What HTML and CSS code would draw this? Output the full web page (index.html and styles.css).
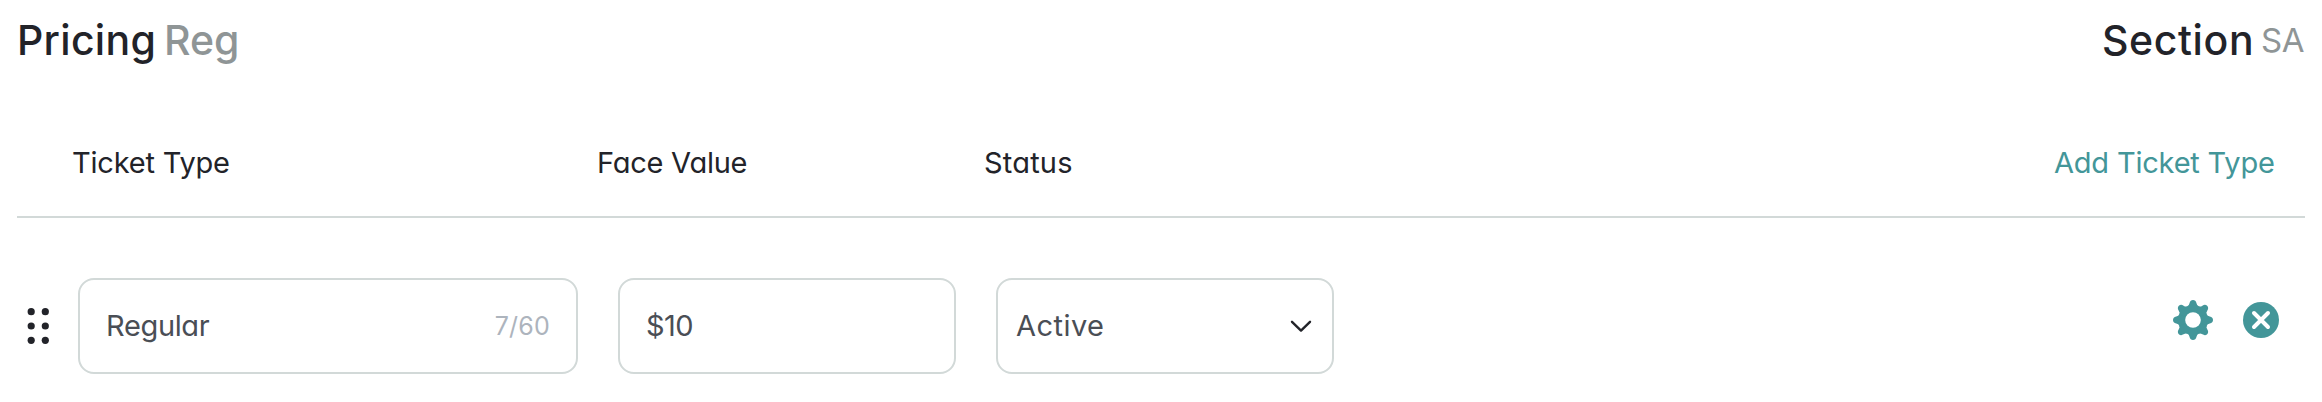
FILE: index.html
```html
<!DOCTYPE html>
<html lang="en">
<head>
<meta charset="utf-8">
<title>Pricing</title>
<link rel="stylesheet" href="styles.css">
</head>
<body>
<main class="pricing">
  <header class="title-bar">
    <h1 class="title"><span class="t-pricing">Pricing</span><span class="muted t-reg">Reg</span></h1>
    <h1 class="title title-right"><span class="t-section">Section</span><span class="muted t-sa">SA</span></h1>
  </header>
  <div class="columns">
    <span class="c-type">Ticket Type</span>
    <span class="c-value">Face Value</span>
    <span class="c-status">Status</span>
    <a class="add">Add Ticket Type</a>
  </div>
  <div class="row">
    <svg class="handle" width="24" height="40" viewBox="0 0 24 40" fill="#222329">
      <circle cx="5.2" cy="5.7" r="3.6"/><circle cx="19.3" cy="5.7" r="3.6"/>
      <circle cx="5.2" cy="20" r="3.6"/><circle cx="19.3" cy="20" r="3.6"/>
      <circle cx="5.2" cy="34.3" r="3.6"/><circle cx="19.3" cy="34.3" r="3.6"/>
    </svg>
    <div class="field name"><span class="v-name">Regular</span><span class="count">7/60</span></div>
    <div class="field price"><span class="v-price">$10</span></div>
    <div class="field status"><span class="v-status">Active</span>
      <svg class="chevron" width="24" height="14" viewBox="0 0 24 14" fill="none" stroke="#222329" stroke-width="2.4" stroke-linecap="round" stroke-linejoin="round"><path d="M3 2.8l9 8.8L21 2.8"/></svg>
    </div>
    <div class="actions">
      <svg width="40" height="40" viewBox="-20 -20 40 40" fill="#439699">
        <defs><path id="tooth" d="M-5.7-13.8Q-4-14.2-3.5-16.8Q-2.7-20 0-20Q2.7-20 3.5-16.8Q4-14.2 5.7-13.8L0 0Z"/></defs>
        <circle r="14.8"/>
        <use href="#tooth"/><use href="#tooth" transform="rotate(45)"/><use href="#tooth" transform="rotate(90)"/><use href="#tooth" transform="rotate(135)"/>
        <use href="#tooth" transform="rotate(180)"/><use href="#tooth" transform="rotate(225)"/><use href="#tooth" transform="rotate(270)"/><use href="#tooth" transform="rotate(315)"/>
        <circle r="7.8" fill="#fff"/>
      </svg>
      <svg width="36" height="36" viewBox="-18 -18 36 36"><circle r="18" fill="#439699"/><path d="M-7-7L7 7M7-7L-7 7" stroke="#fff" stroke-width="4" stroke-linecap="round"/></svg>
    </div>
  </div>
</main>
</body>
</html>
```
FILE: styles.css
```css
body {
  margin: 0;
  background: #fff;
  color: #222329;
  font-family: Inter, "Liberation Sans", sans-serif;
  font-feature-settings: "cv11" 1, "calt" 0;
}
.pricing { height: 402px; padding: 0 17px; box-sizing: border-box; overflow: hidden; }
.title-bar { display: flex; justify-content: space-between; height: 80px; }
.title { display: flex; align-items: center; height: 79px; margin: 0; font-size: 41px; font-weight: 500; white-space: nowrap; }
.muted { color: #8f9596; }
.t-pricing { width: 147px; letter-spacing: 0.3px; }
.t-section { width: 159px; letter-spacing: 0.6px; }
.t-sa { width: 44px; font-size: 33px; font-weight: 400; letter-spacing: -0.4px; }
.columns {
  display: grid;
  grid-template-columns: 525px 387px 1fr 251px;
  height: 138px;
  padding-left: 55px;
  box-sizing: border-box;
  border-bottom: 2px solid #d2d9d8;
  font-size: 29px;
  line-height: 166px;
  white-space: nowrap;
}
.c-type { letter-spacing: -0.2px; }
.c-value { letter-spacing: -0.25px; }
.c-status { letter-spacing: 0.2px; }
.add { color: #439699; letter-spacing: -0.2px; }
.row { display: flex; align-items: flex-start; padding-top: 60px; }
.handle { margin: 28px 28px 0 9px; flex: none; }
.field {
  display: flex;
  align-items: center;
  justify-content: space-between;
  box-sizing: border-box;
  height: 96px;
  padding: 0 26px 1px;
  border: 2px solid #d2d9d8;
  border-radius: 16px;
  color: #4a4e55;
  font-size: 29px;
  white-space: nowrap;
}
.name { width: 500px; }
.v-name { letter-spacing: -0.35px; }
.price { width: 338px; margin-left: 40px; }
.v-price { letter-spacing: -0.6px; }
.status { width: 338px; margin-left: 40px; padding: 0 19px 1px 18px; }
.v-status { letter-spacing: 0.45px; }
.count { color: #adb4bd; font-size: 25px; letter-spacing: 0.2px; }
.actions { display: flex; align-items: center; gap: 30px; margin: 22px 26px 0 auto; }
```
